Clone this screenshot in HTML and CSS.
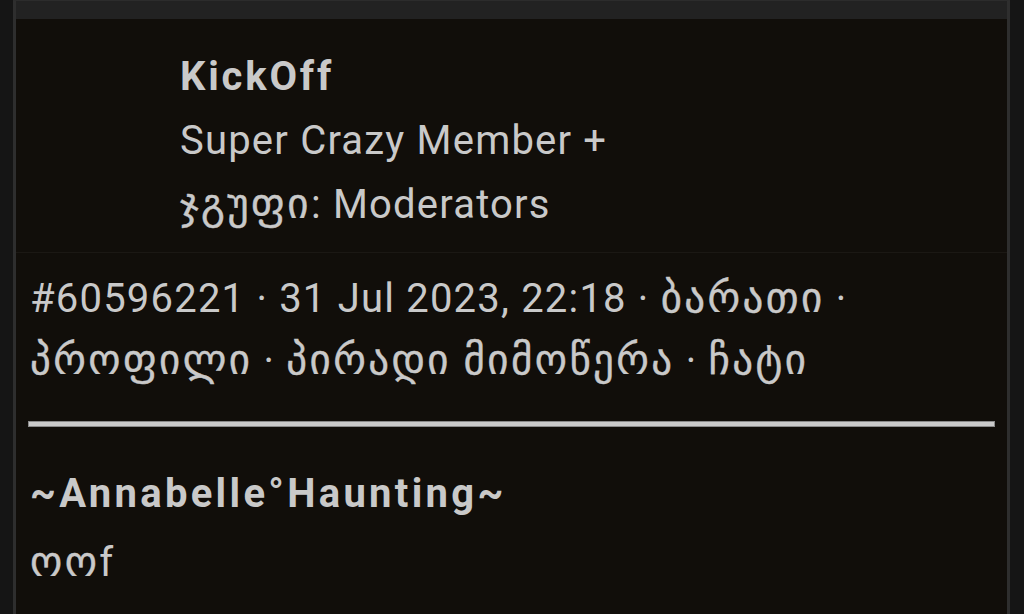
FILE: index.html
```html
<!DOCTYPE html>
<html lang="ka">
<head>
    <meta charset="UTF-8">
    <meta name="viewport" content="width=device-width, initial-scale=1.0">
    <title>KickOff</title>
    <link rel="stylesheet" href="styles.css">
</head>
<body>
    <div class="topbar"></div>
    <div class="post">
        <div class="author">
            <div class="author-name">KickOff</div>
            <div class="author-line">Super Crazy Member +</div>
            <div class="author-line"><span class="ka">ჯგუფი</span>: Moderators</div>
        </div>
        <div class="meta">
            #60596221 · 31 Jul 2023, 22:18 · <span class="ka">ბარათი</span> · <span class="ka">პროფილი</span> · <span class="ka">პირადი მიმოწერა</span> · <span class="ka">ჩატი</span>
        </div>
        <hr class="divider">
        <div class="post-body">
            <div class="quote-name">~Annabelle°Haunting~</div>
            <div class="post-text"><span class="ka">ოო</span>f</div>
        </div>
    </div>
</body>
</html>
```

FILE: styles.css
```css
html, body {
    height: 100%;
}

body {
    margin: 0;
    background: #151515;
    color: #c9c9c9;
    font-family: Roboto, "Noto Sans", "DejaVu Sans", sans-serif;
    font-size: 40px;
    letter-spacing: 1.2px;
    display: flex;
    flex-direction: column;
    padding: 0 14px 0 13px;
    box-sizing: border-box;
    overflow: hidden;
}

.topbar {
    height: 18px;
    background: #222222;
    border-top: 1px solid #2c2c2c;
    border-left: 3px solid #2e2e2e;
    border-right: 3px solid #2e2e2e;
}

.post {
    flex: 1;
    background: #110e0a;
    border-left: 3px solid #2e2e2e;
    border-right: 3px solid #2e2e2e;
}

/* грузинский текст в оригинале крупнее и жирнее */
.ka {
    font-size: 41px;
    line-height: 1;
    letter-spacing: 2.4px;
    -webkit-text-stroke: 0.4px #c9c9c9;
}

.author {
    padding: 26px 0 15px 164px;
    line-height: 64px;
    border-bottom: 1px solid #1b1814;
}

.author-name {
    font-weight: bold;
    letter-spacing: 2.8px;
}

.meta {
    padding: 15px 12px 0 14px;
    line-height: 62px;
}

.divider {
    margin: 29px 12px 0 12px;
    height: 4px;
    border: 1px solid #8a8a8a;
    background: #cacaca;
}

.post-body {
    padding: 36px 14px 0 14px;
}

.quote-name {
    font-weight: bold;
    letter-spacing: 3.3px;
    line-height: 62px;
}

.post-text {
    line-height: 62px;
    margin-top: 7px;
}
```
